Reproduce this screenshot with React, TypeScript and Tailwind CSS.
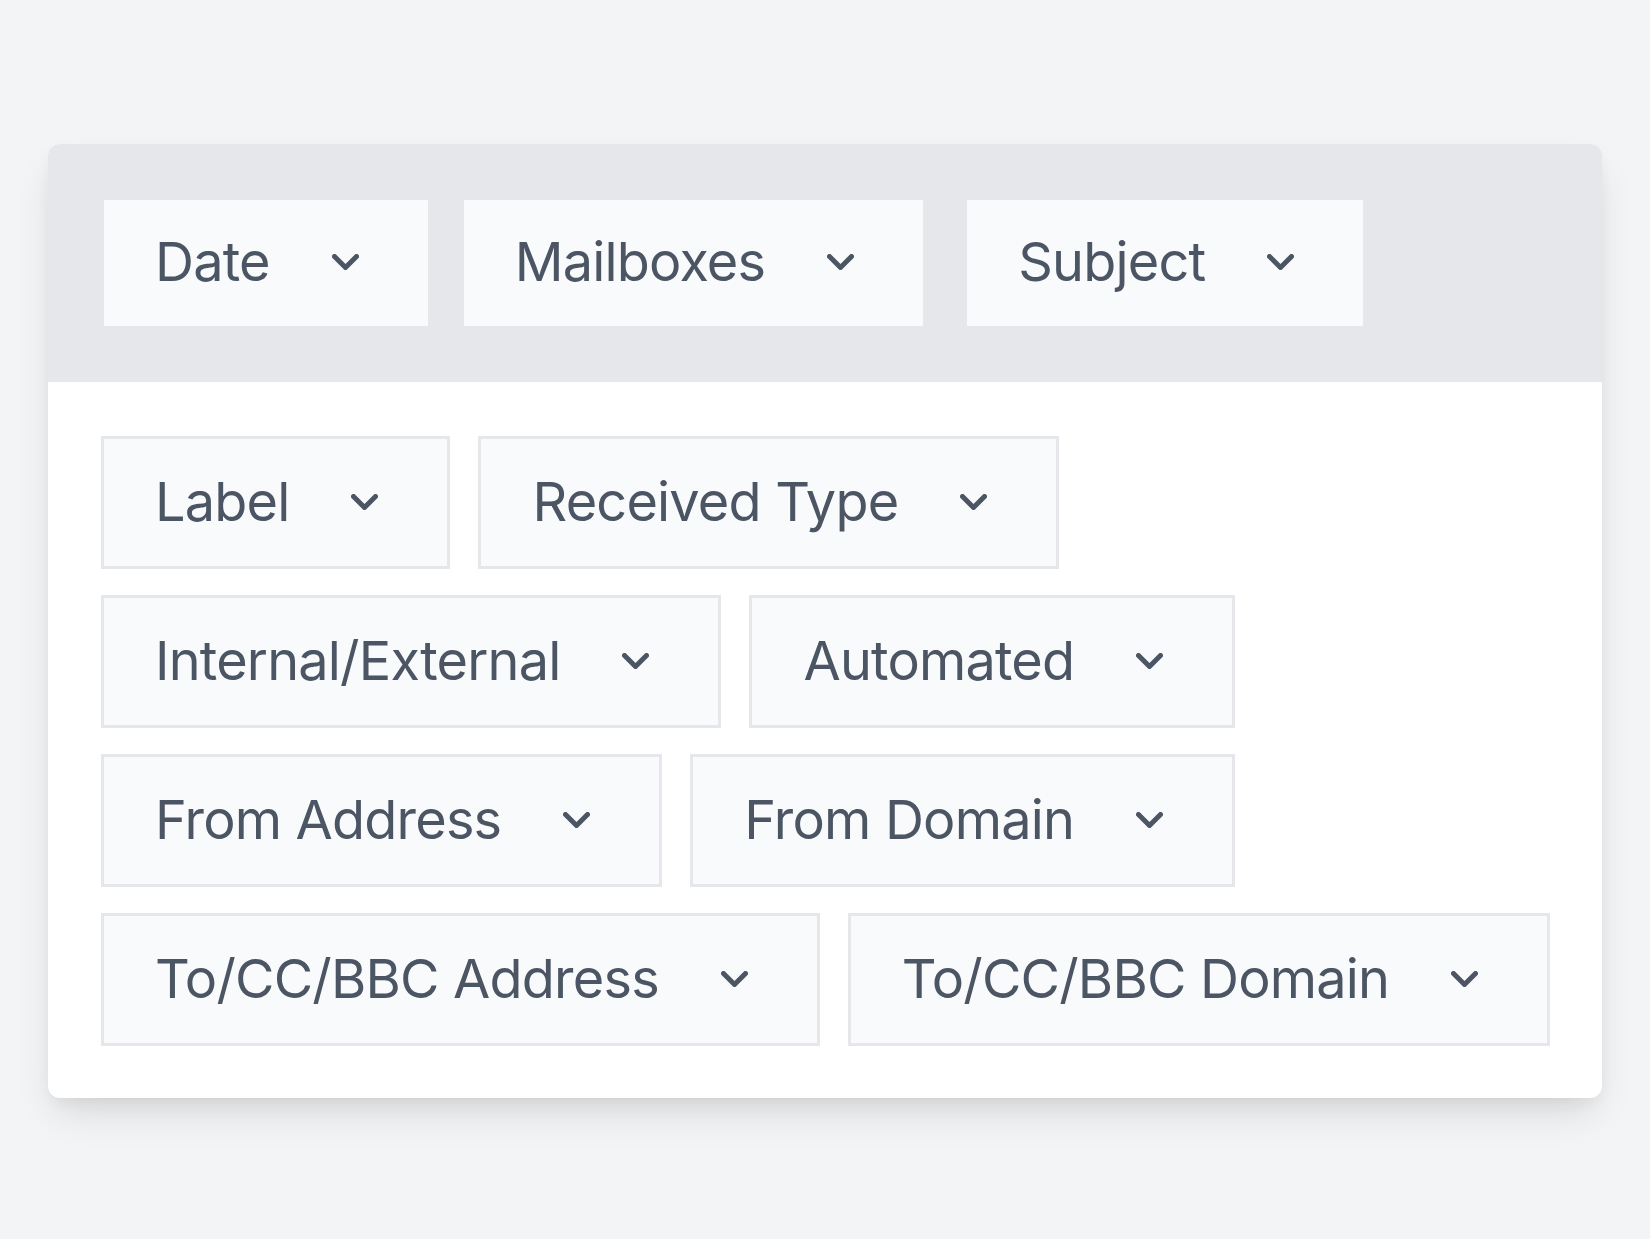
import React from "react";

function Chevron() {
  return (
    <svg width="27" height="16" viewBox="0 0 27 16" fill="none" className="shrink-0">
      <path d="M2.5 2.5 13.5 13.5 24.5 2.5" stroke="currentColor" strokeWidth="5" strokeLinecap="round" strokeLinejoin="round" />
    </svg>
  );
}

function FilterButton({ label, boxed, className = "" }: { label: string; boxed?: boolean; className?: string }) {
  return (
    <button
      type="button"
      className={
        "flex shrink-0 items-center gap-[62px] bg-[#f9fafb] pl-[51px] pr-[69px] pb-[2px] text-[54px] leading-none tracking-[-0.8px] text-[#4b5563] " +
        (boxed ? "h-[133px] border-[3px] border-[#e5e7eb] " : "h-[126px] ") +
        className
      }
    >
      <span className="whitespace-nowrap">{label}</span>
      <Chevron />
    </button>
  );
}

const rows = [
  ["Label", "Received Type"],
  ["Internal/External", "Automated"],
  ["From Address", "From Domain"],
  ["To/CC/BBC Address", "To/CC/BBC Domain"],
];

export default function App() {
  return (
    <div className="min-h-[1239px] bg-[#f3f4f6] px-[48px] pt-[144px] font-['Inter',sans-serif]">
      <div className="overflow-hidden rounded-[12px] bg-white shadow-[0_20px_40px_-8px_rgba(0,0,0,0.12),0_8px_16px_-4px_rgba(0,0,0,0.06)]">
        <div className="flex gap-[36px] bg-[#e5e7eb] p-[56px]">
          <FilterButton label="Date" />
          <FilterButton label="Mailboxes" />
          <FilterButton label="Subject" className="ml-[8px]" />
        </div>
        <div className="flex flex-col gap-[26px] px-[53px] pb-[52px] pt-[54px]">
          {rows.map((r) => (
            <div key={r[0]} className="flex gap-[28px]">
              {r.map((l) => (
                <FilterButton key={l} label={l} boxed />
              ))}
            </div>
          ))}
        </div>
      </div>
    </div>
  );
}
